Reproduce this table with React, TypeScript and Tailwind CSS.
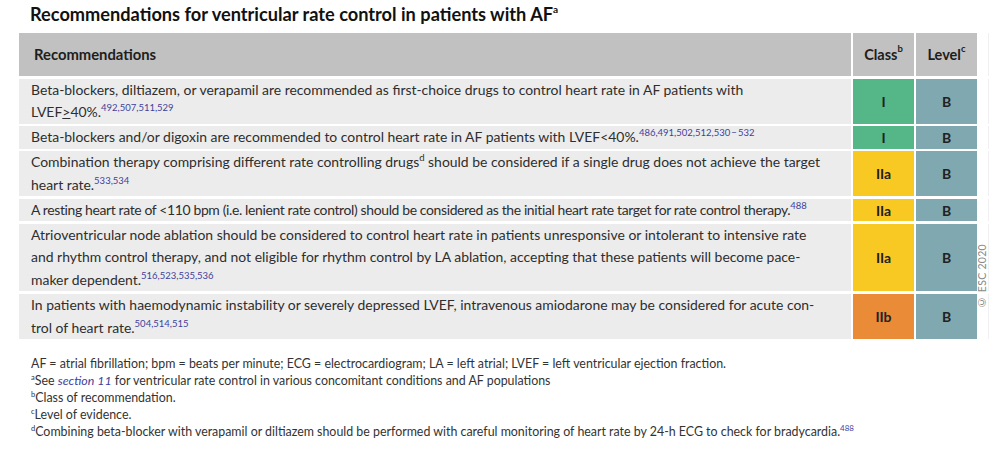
import React from "react";

type Row = {
  text: React.ReactNode;
  cls: string;
  clsBg: string;
  tight?: boolean;
};

const Ref = ({ children }: { children: React.ReactNode }) => (
  <sup className="text-[9.5px] text-[#3f3f9c] tracking-normal -top-[6px]">{children}</sup>
);

const rows: Row[] = [
  {
    text: (
      <>
        Beta-blockers, diltiazem, or verapamil are recommended as first-choice drugs to control heart rate in AF patients with
        <br />
        LVEF<span className="underline decoration-1 underline-offset-[1px]">&gt;</span>40%.<Ref>492,507,511,529</Ref>
      </>
    ),
    cls: "I",
    clsBg: "bg-[#55b788]",
  },
  {
    text: (
      <>
        Beta-blockers and/or digoxin are recommended to control heart rate in AF patients with LVEF&lt;40%.
        <Ref>486,491,502,512,530&thinsp;&minus;&thinsp;532</Ref>
      </>
    ),
    cls: "I",
    clsBg: "bg-[#55b788]",
  },
  {
    text: (
      <>
        Combination therapy comprising different rate controlling drugs<sup className="text-[9.5px] -top-[6px]">d</sup> should be considered if a single drug does not achieve the target
        <br />
        heart rate.<Ref>533,534</Ref>
      </>
    ),
    cls: "IIa",
    clsBg: "bg-[#f8c923]",
  },
  {
    text: (
      <>
        A resting heart rate of &lt;110 bpm (i.e. lenient rate control) should be considered as the initial heart rate target for rate control therapy.
        <Ref>488</Ref>
      </>
    ),
    cls: "IIa",
    clsBg: "bg-[#f8c923]",
    tight: true,
  },
  {
    text: (
      <>
        Atrioventricular node ablation should be considered to control heart rate in patients unresponsive or intolerant to intensive rate
        <br />
        and rhythm control therapy, and not eligible for rhythm control by LA ablation, accepting that these patients will become pace-
        <br />
        maker dependent.<Ref>516,523,535,536</Ref>
      </>
    ),
    cls: "IIa",
    clsBg: "bg-[#f8c923]",
  },
  {
    text: (
      <>
        In patients with haemodynamic instability or severely depressed LVEF, intravenous amiodarone may be considered for acute con-
        <br />
        trol of heart rate.<Ref>504,514,515</Ref>
      </>
    ),
    cls: "IIb",
    clsBg: "bg-[#ea8c37]",
  },
];

export default function App() {
  return (
    <div className="w-[1000px] h-[461px] bg-white overflow-hidden font-['Lato',sans-serif] text-[#2e2e2e]">
      {/* Title */}
      <h1 className="pl-[30px] pt-[3px] h-[33px] text-[18.2px] font-bold text-[#111] leading-[22px]">
        Recommendations for ventricular rate control in patients with AF
        <sup className="text-[10px] -top-[8px]">a</sup>
      </h1>

      {/* Table */}
      <div className="relative ml-[19px] w-[968px]">
        <div className="grid grid-cols-[832px_61px_61px_10px] gap-x-[2px] gap-y-[2.6px]">
          {/* header */}
          <div className="bg-[#c1c1c1] h-[43px] flex items-center pl-[15px] text-[14.8px] font-bold text-[#1e1e1e]">
            Recommendations
          </div>
          <div className="bg-[#c1c1c1] h-[43px] flex items-center justify-center text-[14.5px] font-bold text-[#1e1e1e]">
            Class<sup className="text-[9.5px] -top-[6px]">b</sup>
          </div>
          <div className="bg-[#c1c1c1] h-[43px] flex items-center justify-center text-[14.5px] font-bold text-[#1e1e1e]">
            Level<sup className="text-[9.5px] -top-[6px]">c</sup>
          </div>
          <div className="border-r border-[#f0f0f0]" />

          {rows.map((r, i) => (
            <React.Fragment key={i}>
              <div
                className={`bg-[#ececec] pl-[12px] pr-2 text-[13.95px] leading-[22.5px] whitespace-nowrap ${
                  r.tight ? "tracking-[-0.36px]" : ""
                }`}
              >
                {r.text}
              </div>
              <div className={`${r.clsBg} flex items-center justify-center text-[14px] font-bold text-[#222]`}>
                {r.cls}
              </div>
              <div className="bg-[#7fa8b0] flex items-center justify-center text-[14px] font-bold text-[#222]">
                B
              </div>
              <div className="border-r border-[#f0f0f0]" />
            </React.Fragment>
          ))}
        </div>

        {/* watermark */}
        <div className="absolute left-[958px] top-[211px] [writing-mode:vertical-rl] rotate-180 text-[10.5px] tracking-[0.3px] text-[#8a8a8a] leading-none">
          © ESC 2020
        </div>
      </div>

      {/* Footnotes */}
      <div className="pl-[31px] pt-[16px] text-[12.4px] leading-[17px] text-[#333]">
        <p>AF = atrial fibrillation; bpm = beats per minute; ECG = electrocardiogram; LA = left atrial; LVEF = left ventricular ejection fraction.</p>
        <p>
          <sup className="text-[7.5px] -top-[5px]">a</sup>See{" "}
          <span className="italic text-[#3f3f9c]">section 11</span> for ventricular rate control in various concomitant conditions and AF populations
        </p>
        <p>
          <sup className="text-[7.5px] -top-[5px]">b</sup>Class of recommendation.
        </p>
        <p>
          <sup className="text-[7.5px] -top-[5px]">c</sup>Level of evidence.
        </p>
        <p>
          <sup className="text-[7.5px] -top-[5px]">d</sup>Combining beta-blocker with verapamil or diltiazem should be performed with careful monitoring of heart rate by 24-h ECG to check for bradycardia.
          <sup className="text-[8px] text-[#3f3f9c] -top-[5px]">488</sup>
        </p>
      </div>
    </div>
  );
}
